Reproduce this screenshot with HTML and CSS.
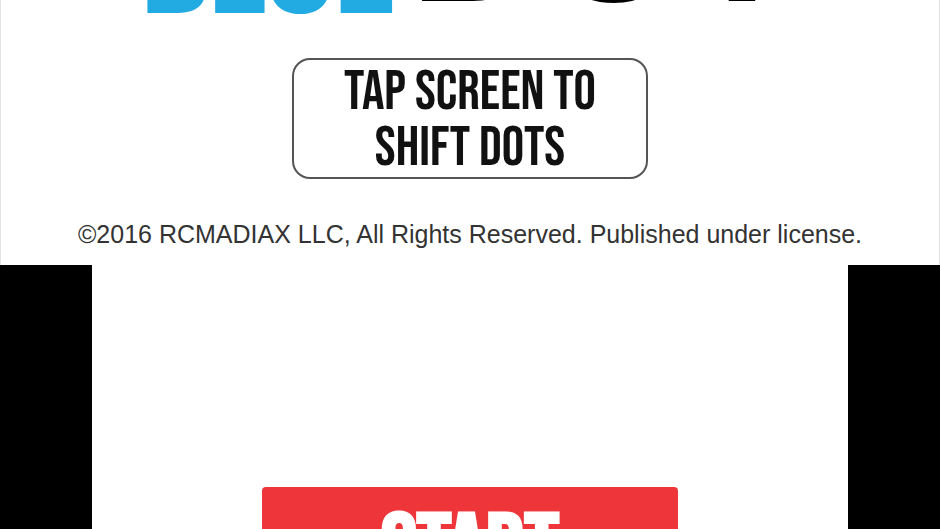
FILE: index.html
```
<!DOCTYPE html>
<html lang="en">
<head>
    <meta charset="UTF-8">
    <meta name="viewport" content="width=device-width, initial-scale=1.0">
    <title>Blue Dot</title>
    <link rel="stylesheet" href="styles.css">
</head>
<body>

    <section class="top-screen">
        <h1 class="logo">
            <span class="logo-blue">BLUE</span>
            <span class="logo-dot">DOT</span>
        </h1>
        <p class="hint">TAP SCREEN TO<br>SHIFT DOTS</p>
        <p class="copyright">©2016 RCMADIAX LLC, All Rights Reserved. Published under license.</p>
    </section>

    <main class="bottom-screen">
        <div class="panel">
            <button type="button" class="start">START</button>
        </div>
    </main>

</body>
</html>
```
FILE: styles.css
```
* {
    box-sizing: border-box;
}

body {
    height: 100vh;
    margin: 0;
    display: flex;
    flex-direction: column;
    overflow: hidden;
    background-color: #fff;
    font-family: "Liberation Sans", Arial, sans-serif;
}

.top-screen {
    display: flex;
    flex-direction: column;
    align-items: center;
    padding-bottom: 16px;
    border: 1px solid #e4e4e4;
    border-width: 0 1px;
}

/* the title runs off the top of the screen */
.logo {
    display: flex;
    align-items: flex-end;
    justify-content: center;
    gap: 16px;
    height: 29px;
    margin: 0 0 29px;
    font-weight: bold;
}

.logo-blue {
    color: #22aae2;
    font-family: Roboto, "Liberation Sans", sans-serif;
    font-size: 105px;
    font-weight: 900;
    line-height: 102px;
}

.logo-dot {
    color: #000;
    font-size: 184px;
    line-height: 184px;
}

.hint {
    width: 38%;
    margin: 0 0 40px;
    padding: 5px 0 0;
    border: 2px solid #555;
    border-radius: 18px;
    color: #111;
    font-family: "Bebas Neue", Roboto, sans-serif;
    font-size: 56px;
    font-weight: normal;
    line-height: 56px;
    text-align: center;
}

.copyright {
    margin: 0;
    color: #333;
    font-size: 25px;
    line-height: 30px;
    white-space: nowrap;
}

.bottom-screen {
    flex: 1;
    min-height: 0;
    display: flex;
    justify-content: center;
    overflow: hidden;
    background-color: #000;
}

.panel {
    width: 80.4%;
    padding-top: 222px;
    background-color: #fff;
    text-align: center;
}

.start {
    width: 55%;
    padding: 17px 0;
    border: none;
    border-radius: 4px;
    background-color: #ee353a;
    color: #fff;
    font-family: "Bebas Neue", Roboto, sans-serif;
    font-size: 96px;
    font-weight: bold;
    line-height: 96px;
    cursor: pointer;
}
```
